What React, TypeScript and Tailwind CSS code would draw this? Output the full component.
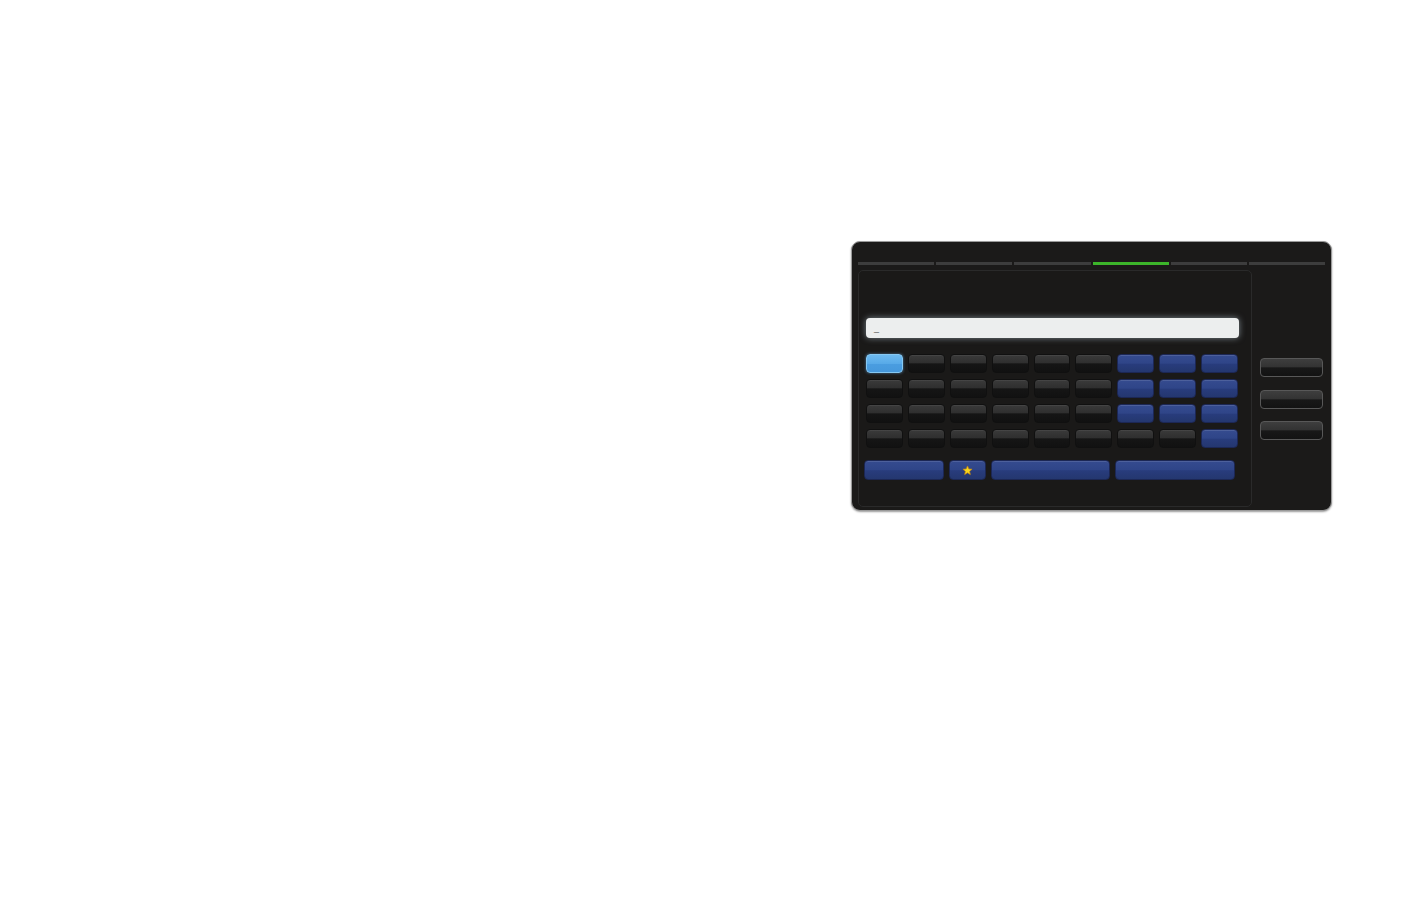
import React from "react";

type Kind = "dark" | "blue" | "sel";

const rows: Kind[][] = [
  ["sel", "dark", "dark", "dark", "dark", "dark", "blue", "blue", "blue"],
  ["dark", "dark", "dark", "dark", "dark", "dark", "blue", "blue", "blue"],
  ["dark", "dark", "dark", "dark", "dark", "dark", "blue", "blue", "blue"],
  ["dark", "dark", "dark", "dark", "dark", "dark", "dark", "dark", "blue"],
];

const keyClass: Record<Kind, string> = {
  dark: "border border-[#101010] bg-[linear-gradient(to_bottom,#3a3a3a_0%,#2f2f2f_46%,#151515_52%,#111111_100%)] shadow-[inset_0_1px_0_rgba(255,255,255,0.06)]",
  blue: "border border-[#1c2755] bg-[linear-gradient(to_bottom,#354b8f_0%,#2f4588_48%,#283c7c_54%,#24376f_100%)] shadow-[inset_0_1px_0_rgba(255,255,255,0.12)]",
  sel: "border border-[#86c8f2] bg-[linear-gradient(to_bottom,#6dbaf0_0%,#58aae8_50%,#4a9de0_54%,#4698dc_100%)] shadow-[0_0_3px_rgba(110,180,240,0.6)]",
};

function Key({ kind }: { kind: Kind }) {
  return <div className={`h-[19px] rounded-[4px] ${keyClass[kind]}`} />;
}

function Star() {
  return (
    <svg width="11" height="11" viewBox="0 0 24 24">
      <path
        d="M12 2l2.9 6.6 7.1.6-5.4 4.7 1.6 7-6.2-3.8-6.2 3.8 1.6-7L2 9.2l7.1-.6z"
        fill="#f7d51d"
        stroke="#c98a0a"
        strokeWidth="1.5"
        strokeLinejoin="round"
      />
    </svg>
  );
}

function SideButton() {
  return (
    <div className="h-[19px] w-[63px] rounded-[4px] border border-[#585858] bg-[linear-gradient(to_bottom,#3e3e3e_0%,#333333_46%,#181818_52%,#131313_100%)]" />
  );
}

export default function App() {
  return (
    <div className="min-h-[918px] w-full bg-white pt-[241px] pl-[851px]">
      <div className="h-[270px] w-[481px] rounded-[9px] border border-[#9a9a9a] bg-[#1b1a19] px-[6px] pt-[20px] shadow-[0_1px_2px_rgba(0,0,0,0.4)]">
        {/* step bar */}
        <div className="flex gap-[2px]">
          {[0, 1, 2, 3, 4, 5].map((i) => (
            <div
              key={i}
              className={`h-[3px] flex-1 ${i === 3 ? "bg-[#3cb52a]" : "bg-[#3d3d3d]"}`}
            />
          ))}
        </div>

        <div className="mt-[5px] flex">
          {/* keyboard panel */}
          <div className="h-[237px] w-[394px] rounded-[5px] border border-[#2a2a2a] bg-[#1a1918] pl-[7px] pt-[47px]">
            <div className="flex h-[20px] w-[373px] items-center rounded-[4px] bg-[#eceeee] pl-[8px] shadow-[0_0_6px_rgba(200,220,235,0.55)]">
              <span className="font-['Liberation_Sans',sans-serif] text-[9px] leading-none text-[#555]">
                _
              </span>
            </div>

            <div className="mt-[16px] flex w-[372px] flex-col gap-[6px]">
              {rows.map((row, r) => (
                <div key={r} className="grid grid-cols-9 gap-x-[5px]">
                  {row.map((k, c) => (
                    <Key key={c} kind={k} />
                  ))}
                </div>
              ))}
            </div>

            <div className="mt-[12px] -ml-[2px] flex gap-[5px]">
              <div className={`h-[20px] w-[80px] rounded-[4px] ${keyClass.blue}`} />
              <div
                className={`flex h-[20px] w-[37px] items-center justify-center rounded-[4px] ${keyClass.blue}`}
              >
                <Star />
              </div>
              <div className={`h-[20px] w-[119px] rounded-[4px] ${keyClass.blue}`} />
              <div className={`h-[20px] w-[120px] rounded-[4px] ${keyClass.blue}`} />
            </div>
          </div>

          {/* side actions */}
          <div className="flex flex-col pl-[8px] pt-[88px]">
            <SideButton />
            <div className="mt-[13px]">
              <SideButton />
            </div>
            <div className="mt-[12px]">
              <SideButton />
            </div>
          </div>
        </div>
      </div>
    </div>
  );
}
